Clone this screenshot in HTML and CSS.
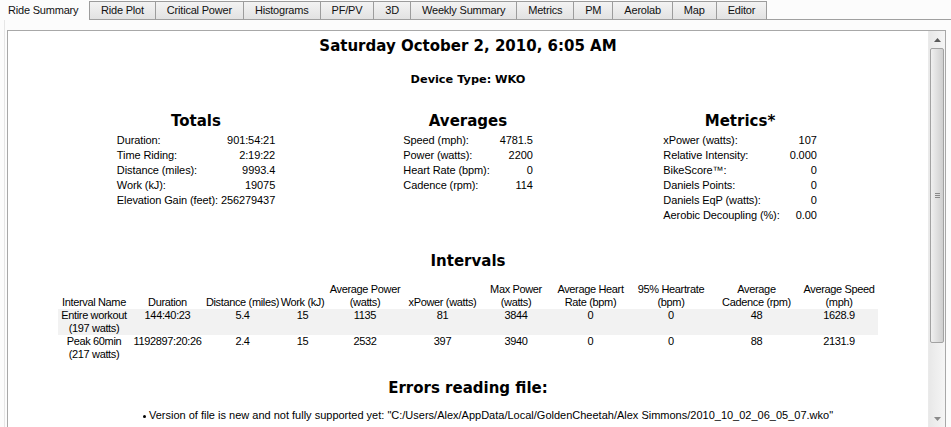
FILE: index.html
```html
<!DOCTYPE html>
<html>
<head>
<meta charset="utf-8">
<link rel="stylesheet" href="styles.css">
</head>
<body>
<div class="tabs">
  <div class="tab active">Ride Summary</div>
  <div class="tab">Ride Plot</div>
  <div class="tab">Critical Power</div>
  <div class="tab">Histograms</div>
  <div class="tab">PF/PV</div>
  <div class="tab">3D</div>
  <div class="tab">Weekly Summary</div>
  <div class="tab">Metrics</div>
  <div class="tab">PM</div>
  <div class="tab">Aerolab</div>
  <div class="tab">Map</div>
  <div class="tab">Editor</div>
  <div class="tab-fill"></div>
</div>
<div class="pane">
  <div class="frame">
    <div class="content">
      <h1 class="title">Saturday October 2, 2010, 6:05 AM</h1>
      <div class="device">Device Type: WKO</div>
      <div class="summary">
        <div class="col">
          <h2>Totals</h2>
          <table class="kv">
            <tr><td>Duration:</td><td class="v">901:54:21</td></tr>
            <tr><td>Time Riding:</td><td class="v">2:19:22</td></tr>
            <tr><td>Distance (miles):</td><td class="v">9993.4</td></tr>
            <tr><td>Work (kJ):</td><td class="v">19075</td></tr>
            <tr><td>Elevation Gain (feet):</td><td class="v">256279437</td></tr>
          </table>
        </div>
        <div class="col">
          <h2>Averages</h2>
          <table class="kv wide">
            <tr><td>Speed (mph):</td><td class="v">4781.5</td></tr>
            <tr><td>Power (watts):</td><td class="v">2200</td></tr>
            <tr><td>Heart Rate (bpm):</td><td class="v">0</td></tr>
            <tr><td>Cadence (rpm):</td><td class="v">114</td></tr>
          </table>
        </div>
        <div class="col">
          <h2>Metrics*</h2>
          <table class="kv wide">
            <tr><td>xPower (watts):</td><td class="v">107</td></tr>
            <tr><td>Relative Intensity:</td><td class="v">0.000</td></tr>
            <tr><td>BikeScore™:</td><td class="v">0</td></tr>
            <tr><td>Daniels Points:</td><td class="v">0</td></tr>
            <tr><td>Daniels EqP (watts):</td><td class="v">0</td></tr>
            <tr><td>Aerobic Decoupling (%):</td><td class="v">0.00</td></tr>
          </table>
        </div>
      </div>
      <h2 class="section">Intervals</h2>
      <table class="intervals">
        <colgroup>
          <col class="c1"><col class="c2"><col class="c3"><col class="c4"><col class="c5"><col class="c6"><col class="c7"><col class="c8"><col class="c9"><col class="c10"><col class="c11">
        </colgroup>
        <tr class="head">
          <td>Interval Name</td><td>Duration</td><td>Distance (miles)</td><td>Work (kJ)</td><td>Average Power<br>(watts)</td><td>xPower (watts)</td><td>Max Power<br>(watts)</td><td>Average Heart<br>Rate (bpm)</td><td>95% Heartrate<br>(bpm)</td><td>Average<br>Cadence (rpm)</td><td>Average Speed<br>(mph)</td>
        </tr>
        <tr class="shade">
          <td>Entire workout<br>(197 watts)</td><td>144:40:23</td><td>5.4</td><td>15</td><td>1135</td><td>81</td><td>3844</td><td>0</td><td>0</td><td>48</td><td>1628.9</td>
        </tr>
        <tr>
          <td>Peak 60min<br>(217 watts)</td><td>1192897:20:26</td><td>2.4</td><td>15</td><td>2532</td><td>397</td><td>3940</td><td>0</td><td>0</td><td>88</td><td>2131.9</td>
        </tr>
      </table>
      <h2 class="section errors">Errors reading file:</h2>
      <ul class="errlist">
        <li>Version of file is new and not fully supported yet: "C:/Users/Alex/AppData/Local/GoldenCheetah/Alex Simmons/2010_10_02_06_05_07.wko"</li>
      </ul>
    </div>
    <div class="scrollbar">
      <div class="arrow up"><svg width="7" height="4" viewBox="0 0 7 4"><path d="M0 4 L3.5 0 L7 4 Z" fill="#5a5a5a"/></svg></div>
      <div class="track">
        <div class="thumb"><div class="grip"></div></div>
      </div>
      <div class="arrow down"><svg width="7" height="4" viewBox="0 0 7 4"><path d="M0 0 L3.5 4 L7 0 Z" fill="#8a8a8a"/></svg></div>
    </div>
  </div>
</div>
</body>
</html>
```
FILE: styles.css
```css
* { box-sizing: border-box; }
html, body {
  margin: 0;
  padding: 0;
  background: #fcfcfc;
  font-family: "Liberation Sans", Arial, sans-serif;
  font-size: 11px;
  letter-spacing: -0.1px;
  color: #000;
  overflow: hidden;
  height: 427px;
}
.tabs {
  display: flex;
  height: 20px;
  align-items: stretch;
}
.tab {
  padding: 0 11px;
  border: 1px solid #9c9c9c;
  border-left: none;
  border-bottom: 1px solid #a0a0a0;
  background: linear-gradient(#f3f3f3, #e2e2e2);
  display: flex;
  align-items: center;
  line-height: 1;
  margin-top: 1px;
  letter-spacing: -0.2px;
  color: #111;
}
.tab:nth-child(2) { border-left: 1px solid #9c9c9c; }
.tab.active {
  background: #fcfcfc;
  border: none;
  padding: 0 8px 0 8px;
  margin-top: 0;
  width: 89px;
  padding-top: 1px;
}
.tab-fill {
  flex: 1;
  border-bottom: 1px solid #a0a0a0;
}
.pane {
  height: 407px;
  padding: 10px 5px 0 2px;
  border-left: 1px solid #e6e6e6;
  margin-left: 4px;
}
.frame {
  display: flex;
  height: 100%;
  border: 1px solid #a8a8a8;
  border-bottom: none;
  background: #fff;
}
.content {
  flex: 1;
}
.title {
  margin: 6px 0 0;
  font-family: "DejaVu Sans", Verdana, sans-serif;
  font-weight: bold;
  font-size: 15px;
  letter-spacing: 0;
  line-height: 18px;
  text-align: center;
}
.device {
  margin-top: 18px;
  font-family: "DejaVu Sans", Verdana, sans-serif;
  font-weight: bold;
  font-size: 11.3px;
  letter-spacing: 0;
  line-height: 14px;
  text-align: center;
}
.summary {
  display: grid;
  grid-template-columns: repeat(3, 272px);
  justify-content: center;
  margin-top: 25px;
  align-items: start;
}
.col {
  display: flex;
  flex-direction: column;
  align-items: center;
}
h2 {
  margin: 0;
  font-family: "DejaVu Sans", Verdana, sans-serif;
  font-weight: bold;
  font-size: 15px;
  letter-spacing: 0;
  line-height: 18px;
  text-align: center;
}
.kv {
  border-collapse: collapse;
  margin-top: 3px;
}
.kv td {
  padding: 0;
  line-height: 15px;
  height: 15px;
  white-space: nowrap;
  vertical-align: middle;
}
.kv td.v {
  text-align: right;
  padding-left: 3px;
}
.kv.wide td.v { padding-left: 10px; }
.section {
  margin-top: 29px;
}
.intervals {
  margin: 13px auto 0;
  table-layout: fixed;
  border-collapse: collapse;
  width: 820px;
  letter-spacing: -0.35px;
}
.intervals td {
  padding: 0;
  text-align: center;
  line-height: 13px;
  white-space: nowrap;
  vertical-align: top;
}
.intervals tr.head td { vertical-align: bottom; }
.intervals tr.shade td { background: #f2f2f2; }
.intervals tr td { height: 26px; }
.c1 { width: 72px; }
.c2 { width: 75px; }
.c3 { width: 75px; }
.c4 { width: 45px; }
.c5 { width: 80px; }
.c6 { width: 75px; }
.c7 { width: 72px; }
.c8 { width: 77px; }
.c9 { width: 84px; }
.c10 { width: 87px; }
.c11 { width: 78px; }
.errors {
  margin-top: 18px;
}
.errlist {
  margin: 11px 0 0;
  padding: 0 0 0 40px;
  list-style: none;
  text-align: center;
  line-height: 14px;
  white-space: nowrap;
  letter-spacing: 0;
}
.errlist li::before {
  content: "";
  display: inline-block;
  width: 3px;
  height: 3px;
  background: #000;
  border-radius: 50%;
  vertical-align: middle;
  margin-right: 3px;
}
.scrollbar {
  width: 17px;
  display: flex;
  flex-direction: column;
  background: linear-gradient(90deg, #e8e8e8, #f5f5f5);
  border-left: 1px solid #eaeaea;
}
.arrow {
  height: 17px;
  display: flex;
  align-items: center;
  justify-content: center;
}
.track {
  flex: 1;
  display: flex;
  flex-direction: column;
}
.thumb {
  margin: 0 1px;
  height: 295px;
  border: 1px solid #a2a2a2;
  border-radius: 2px;
  background: linear-gradient(90deg, #f0f0f0, #dcdcdc 60%, #cfcfcf);
  display: flex;
  align-items: center;
  justify-content: center;
}
.grip {
  width: 5px;
  height: 5px;
  border-top: 1px solid #8a8a8a;
  border-bottom: 1px solid #8a8a8a;
  position: relative;
}
.grip::after {
  content: "";
  position: absolute;
  left: 0;
  right: 0;
  top: 1px;
  border-top: 1px solid #8a8a8a;
}
```
